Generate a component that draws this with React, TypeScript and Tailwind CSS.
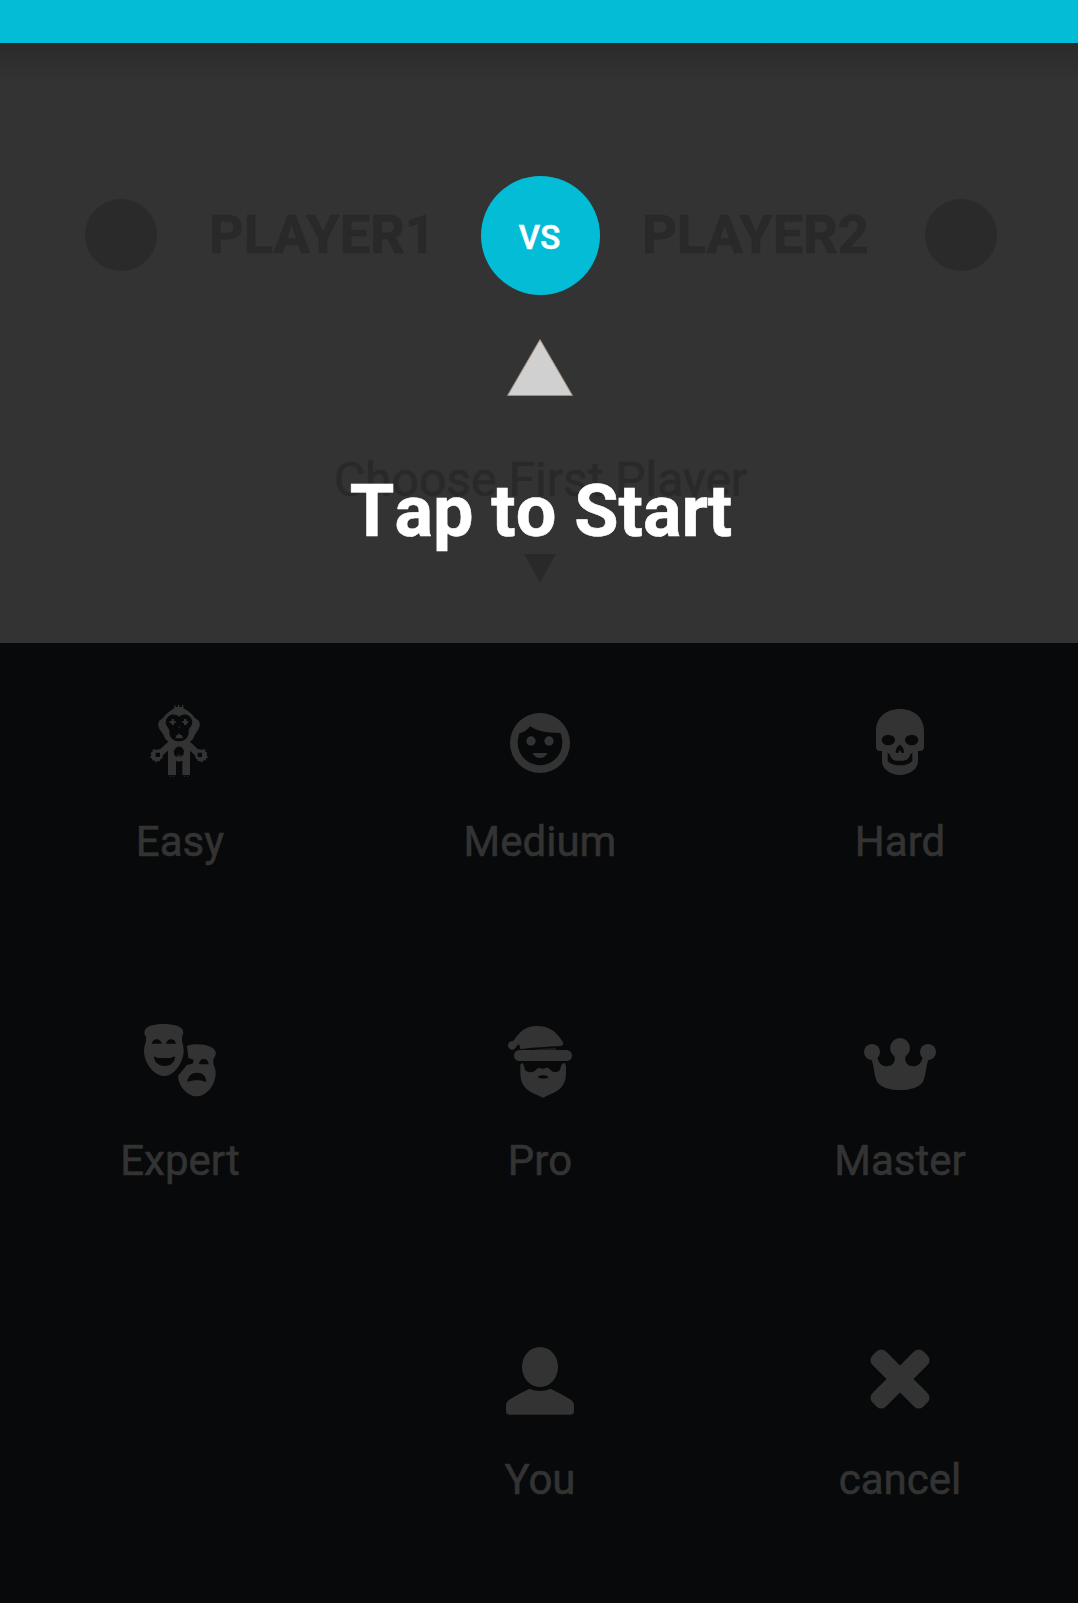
import type { ReactNode } from "react";

type Level = { label: string; viewBox: string; art: ReactNode };

const INK = "#333333";
const HOLE = "#08090a";

const levels: (Level | null)[] = [
  {
    label: "Easy",
    viewBox: "72 30 216 240",
    art: (
      <>
        <path d="M163 45h3v6h8v-6h4v6h8v-6h4v9l6 4C210 66 220 77 225 84L237 93L240 104L236 117L226 132L219 147L210 155L233 177L243 179L256 178V185L262 188L260 194L264 204L258 205L257 212L251 210L246 218L241 213L234 214L231 207L226 205V197L210 182V255H187V217H168V255H144V182L128 196V205L122 207L120 214L112 213L107 218L102 210L97 212L96 205L90 203L94 195L91 189L98 185V178L110 179L121 177L145 155L136 147L129 132L118 117L114 104L117 93L129 84C134 77 144 66 158 58L163 54z" />
        <path fill={HOLE} d="M177 80c-8-8-24-8-31-1-9 7-11 19-6 28 4 7 9 10 8 18-1 17 13 29 29 29s30-12 29-29c-1-8 4-11 8-18 5-9 3-21-6-28-7-7-23-7-31 1z" />
        <path d="M155 87h6v6h6v6h-5v6h-7v-6h-6v-6h6zm37 0h7v6h6v6h-5v6h-8v-6h-5v-6h5zM170 135l4-1 3-6 3 6 5 1 4 10h-23zM176 109h3v4h-3z" />
        <path fill={HOLE} d="M168 173l5-3h9l6 5 4 8-2 13h-5v4h-4v-6h-3v6h-3v-6h-3v6h-4l-5-5-2-11zM107 188h13v13h-13zm126 0h13v13h-13zM168 212l8 3 11-3v6h-19z" />
        <path d="M149 257h4v3h-4zm9 0h3v3h-3zm33 0h4v3h-4zm10 0h3v3h-3z" />
      </>
    ),
  },
  {
    label: "Medium",
    viewBox: "192 30 216 240",
    art: (
      <>
        <circle cx="300" cy="159" r="90" />
        <path fill={HOLE} d="M270 109c24 15 50 20 91 20 4 8 6 18 6 29a67 67 0 0 1-134 1c0-11 2-20 5-29 14-3 24-10 32-21z" />
        <circle cx="273" cy="153" r="14" />
        <circle cx="327" cy="153" r="14" />
        <path d="M277 189h46c-5 9-13 15-23 15s-18-6-23-15z" />
      </>
    ),
  },
  {
    label: "Hard",
    viewBox: "102 30 216 240",
    art: (
      <>
        <path d="M210 57c43 0 72 27 72 65v50c0 7-4 11-12 11h-6v30c0 24-25 42-54 42s-54-18-54-42v-30h-6c-8 0-12-4-12-11v-50c0-38 29-65 72-65z" />
        <ellipse fill={HOLE} cx="175" cy="150" rx="20" ry="16" />
        <ellipse fill={HOLE} cx="245" cy="150" rx="20" ry="16" />
        <path fill={HOLE} d="M210 164c5 3 12 12 12 21 0 5-7 5-9 0l-3-6-3 6c-2 5-10 5-10 0 0-9 7-18 13-21zM173 188l7 6c3 12 11 18 24 18h12c14 0 22-7 24-18l7-6v24c-7 10-20 14-37 14s-30-4-37-14z" />
      </>
    ),
  },
  {
    label: "Expert",
    viewBox: "102 27 216 240",
    art: (
      <>
        <path d="M104 62c4-14 28-20 57-20s54 6 58 20c2 9-1 14-3 18v15c3 8 5 17 5 28-1 35-28 75-58 75s-60-38-61-73c0-12 2-21 6-30V80c-4-5-6-10-4-18z" />
        <path fill={HOLE} d="M125 101c2-9 8-13 15-13s14 5 15 13zm43 0c1-8 8-13 15-13s13 4 15 13zM132 139l11 5h38l14-5c0 18-13 29-31 29s-32-11-32-29z" />
        <path d="M230 109c8-5 20-6 30-6 31 0 55 9 57 24 1 8-2 15-7 19v17c4 8 7 16 7 26 0 36-28 70-56 70-29 0-57-32-57-62 12-13 20-24 26-32l18-4 3-12-16-5c-1-12-2-25-5-35z" />
        <path fill={HOLE} d="M267 163c1-11 6-16 14-16 9 0 14 5 15 16zM232 216c2-20 14-28 29-28 16 0 27 9 28 28-9-3-17-5-28-5-12 0-20 2-29 5z" />
      </>
    ),
  },
  {
    label: "Pro",
    viewBox: "102 27 216 240",
    art: (
      <>
        <path d="M150 113l-3-11-8 7c-1 7-6 10-13 10s-12-6-12-13 5-12 12-12l4-1c18-28 37-45 70-45 38 0 61 17 80 51 1 5-3 8-8 9-41 3-75 3-116 9-5 0-6-1-6-4z" />
        <rect x="132" y="120" width="174" height="33" rx="16" />
        <path d="M151 163l8-4 6 20c8 10 21 9 30 3 5-5 9-10 17-7 5 2 10 1 15-1 8-2 12 3 17 8 8 6 19 6 25-1l7-20 8-2 4 9v22c0 36-20 54-50 64l-19 9-19-9c-29-10-49-28-49-64z" />
        <path d="M180 121c22-4 50-6 78-7v7z" fillOpacity="0.5" />
        <path fill={HOLE} d="M203 201c6-7 26-7 33 0-7 6-26 6-33 0z" />
      </>
    ),
  },
  {
    label: "Master",
    viewBox: "132 27 216 240",
    art: (
      <>
        <circle cx="156" cy="126" r="24" />
        <circle cx="240" cy="114" r="30" />
        <circle cx="324" cy="126" r="24" />
        <path d="M172 142c4 20 15 27 28 27 18 0 28-12 23-33h34c-5 21 5 33 23 33 13 0 24-7 28-27l18 5c-9 22-7 45-17 68-10 18-43 25-69 25s-59-7-69-25c-10-23-8-46-17-68z" />
      </>
    ),
  },
  null,
  {
    label: "You",
    viewBox: "72 24 216 240",
    art: (
      <>
        <ellipse cx="180" cy="111" rx="54" ry="60" />
        <path d="M149 176c18 9 44 9 62 0 21 10 41 20 59 32 8 5 12 10 12 20v15c0 8-4 11-12 11H90c-8 0-12-3-12-11v-15c0-10 4-15 12-20 18-12 38-22 59-32z" />
      </>
    ),
  },
  {
    label: "cancel",
    viewBox: "132 24 216 240",
    art: (
      <>
        <rect x="132" y="118.500" width="216" height="57" rx="19" transform="rotate(45 240 147)" />
        <rect x="132" y="118.500" width="216" height="57" rx="19" transform="rotate(-45 240 147)" />
      </>
    ),
  },
];

function Header() {
  return (
    <section className="flex h-[600px] flex-col items-center bg-[#333333]">
      <div className="h-[40px] w-full shrink-0 bg-gradient-to-b from-[#2a2a2a] to-[#333333]" />
      <div className="mt-[92px] flex h-[120px] w-full shrink-0 items-center pl-[85px] text-[54px] font-bold leading-none text-[#292929]">
        <span className="size-[72px] shrink-0 rounded-full bg-[#2a2a2a]" />
        <span className="ml-[52px] w-[272px] shrink-0 [-webkit-text-stroke:0.6px_#292929]">PLAYER1</span>
        <span className="flex size-[119px] shrink-0 items-center justify-center rounded-full bg-[#03bcd6] pr-[2px] pt-[5px] text-[33px] font-medium text-white [-webkit-text-stroke:0.6px_white]">
          VS
        </span>
        <span className="ml-[42px] w-[283px] shrink-0 [-webkit-text-stroke:0.6px_#292929]">PLAYER2</span>
        <span className="size-[72px] shrink-0 rounded-full bg-[#2a2a2a]" />
      </div>
      <svg className="ml-[2px] mt-[42px] h-[60px] w-[68px] shrink-0" viewBox="0 0 68 60">
        <path d="M34 2.500L66.500 58.500H1.500z" fill="#d0d0d0" stroke="#a58c78" />
      </svg>
      <p className="ml-[3px] mt-[55px] text-[48px] leading-[56px] text-[#292929] [-webkit-text-stroke:0.6px_#292929]">
        Choose First Player
      </p>
      <svg className="ml-[2px] mt-[46px] h-[28px] w-[32px] shrink-0" viewBox="0 0 32 28">
        <path d="M0 0h32L16 28z" fill="#292929" />
      </svg>
    </section>
  );
}

export default function App() {
  return (
    <main className="relative h-[1603px] w-[1078px] overflow-hidden bg-[#08090a] font-['Roboto',sans-serif]">
      <div className="h-[43px] bg-[#03bcd6]" />
      <Header />
      <section className="grid w-[1080px] auto-rows-[319px] grid-cols-[360px_360px_360px]">
        {levels.map((level, i) => (
          <div key={i} className="flex flex-col items-center pt-[57px]">
            {level && (
              <>
                <svg className="h-[80px] w-[72px]" viewBox={level.viewBox} fill={INK}>
                  {level.art}
                </svg>
                <span className="mt-[37px] text-[42px] leading-[50px] text-[#333333] [-webkit-text-stroke:0.6px_#333333]">
                  {level.label}
                </span>
              </>
            )}
          </div>
        ))}
      </section>
      <div className="absolute left-[2px] top-[470px] w-full text-center text-[72px] font-bold leading-[84px] text-white [-webkit-text-stroke:0.6px_white] [font-kerning:none]">
        Tap to Start
      </div>
    </main>
  );
}
